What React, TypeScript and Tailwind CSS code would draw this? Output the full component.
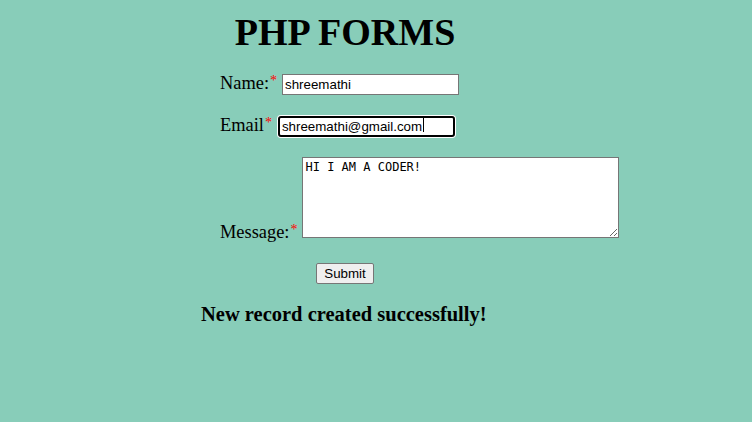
import React from "react";

const serif = "font-['Liberation_Serif',_'Times_New_Roman',_serif]";
const inputBase =
    "h-[21px] w-[177px] bg-white px-[2px] text-[13.33px] text-black font-['Liberation_Sans',_Arial,_sans-serif]";

const Star = () => <span className="ml-px align-[4px] text-[14px] leading-none text-[#ff0000]">*</span>;

const App = () => {
    return (
        <div className={`min-h-[422px] w-full bg-[#88cdb9] pt-[13px] text-black ${serif}`}>
            <div className="w-[690px]">
                <h1 className="text-center text-[38px] font-bold leading-none">PHP FORMS</h1>
            </div>

            <form className="pl-[220px]" onSubmit={e => e.preventDefault()}>
                {/* name */}
                <div className="mt-[19px] flex items-baseline">
                    <label className="text-[18.4px]">
                        Name:<Star />
                    </label>
                    <input
                        className={`${inputBase} ml-[5px] border border-[#767676]`}
                        defaultValue="shreemathi"
                    />
                </div>

                {/* email - shown focused */}
                <div className="mt-[14px] flex items-baseline">
                    <label className="text-[18.4px]">
                        Email<Star />
                    </label>
                    <div className="relative ml-[6px]">
                        <input
                            className={`${inputBase} rounded-[3px] border-2 border-black shadow-[0_0_0_1px_white] outline-none`}
                            defaultValue="shreemathi@gmail.com"
                        />
                        <span className="absolute left-[145px] top-[4px] h-[14px] w-px bg-black" />
                    </div>
                </div>

                {/* message */}
                <div className="mt-[18px] flex items-end">
                    <label className="-mb-[5px] text-[18.4px] leading-[21px]">
                        Message:<Star />
                    </label>
                    <textarea
                        className="ml-[5px] h-[81px] w-[317px] resize border border-[#767676] bg-white p-[2px] text-[12px] leading-[15px] text-black font-['DejaVu_Sans_Mono',_monospace]"
                        defaultValue="HI I AM A CODER!"
                    />
                </div>

                <div className="mt-[23px] pl-[96px]">
                    <button
                        type="submit"
                        className="h-[21px] w-[58px] rounded-[2px] border border-[#767676] bg-[#efefef] text-[13.33px] leading-none text-black font-['Liberation_Sans',_Arial,_sans-serif]"
                    >
                        Submit
                    </button>
                </div>
            </form>

            <p className="ml-[201px] mt-[19px] text-[20.5px] font-bold leading-none">
                New record created successfully!
            </p>
        </div>
    );
};

export default App;
